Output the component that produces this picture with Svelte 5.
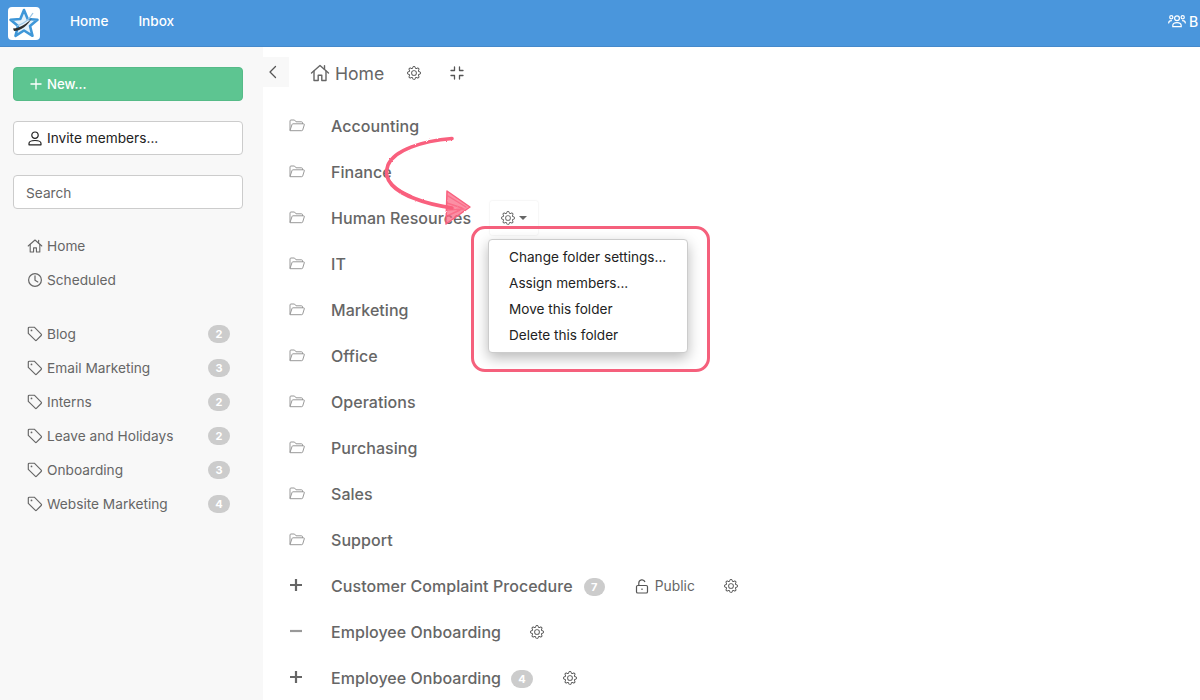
<script>
  const tags = [
    ['Blog', 2], ['Email Marketing', 3], ['Interns', 2],
    ['Leave and Holidays', 2], ['Onboarding', 3], ['Website Marketing', 4]
  ];
  const folders = ['Accounting', 'Finance', 'Human Resources', 'IT', 'Marketing', 'Office', 'Operations', 'Purchasing', 'Sales', 'Support'];
  const menu = ['Change folder settings...', 'Assign members...', 'Move this folder', 'Delete this folder'];
</script>

{#snippet gear(size)}
  <svg class="gear" width={size} height={size} viewBox="0 0 16 16" fill="currentColor">
    <path d="M8 4.754a3.246 3.246 0 1 0 0 6.492 3.246 3.246 0 0 0 0-6.492zM5.754 8a2.246 2.246 0 1 1 4.492 0 2.246 2.246 0 0 1-4.492 0z"/>
    <path d="M9.796 1.343c-.527-1.79-3.065-1.79-3.592 0l-.094.319a.873.873 0 0 1-1.255.52l-.292-.16c-1.64-.892-3.433.902-2.54 2.541l.159.292a.873.873 0 0 1-.52 1.255l-.319.094c-1.79.527-1.79 3.065 0 3.592l.319.094a.873.873 0 0 1 .52 1.255l-.16.292c-.892 1.64.901 3.434 2.541 2.54l.292-.159a.873.873 0 0 1 1.255.52l.094.319c.527 1.79 3.065 1.79 3.592 0l.094-.319a.873.873 0 0 1 1.255-.52l.292.16c1.64.893 3.434-.902 2.54-2.541l-.159-.292a.873.873 0 0 1 .52-1.255l.319-.094c1.79-.527 1.79-3.065 0-3.592l-.319-.094a.873.873 0 0 1-.52-1.255l.16-.292c.893-1.64-.902-3.433-2.541-2.54l-.292.159a.873.873 0 0 1-1.255-.52l-.094-.319zm-2.633.283c.246-.835 1.428-.835 1.674 0l.094.319a1.873 1.873 0 0 0 2.693 1.115l.291-.16c.764-.415 1.6.42 1.184 1.185l-.159.292a1.873 1.873 0 0 0 1.116 2.692l.318.094c.835.246.835 1.428 0 1.674l-.319.094a1.873 1.873 0 0 0-1.115 2.693l.16.291c.415.764-.42 1.6-1.185 1.184l-.291-.159a1.873 1.873 0 0 0-2.693 1.116l-.094.318c-.246.835-1.428.835-1.674 0l-.094-.319a1.873 1.873 0 0 0-2.692-1.115l-.292.16c-.764.415-1.6-.42-1.184-1.185l.159-.291A1.873 1.873 0 0 0 1.945 8.93l-.319-.094c-.835-.246-.835-1.428 0-1.674l.319-.094A1.873 1.873 0 0 0 3.06 4.377l-.16-.292c-.415-.764.42-1.6 1.185-1.184l.292.159a1.873 1.873 0 0 0 2.692-1.115l.094-.319z"/>
  </svg>
{/snippet}

{#snippet house(size)}
  <svg width={size} height={size} viewBox="0 0 20 20" fill="none" stroke="currentColor" stroke-width="1.4" stroke-linecap="round" stroke-linejoin="round">
    <path d="M1.5 10 10 2.5 18.5 10"/>
    <path d="M14.5 2.8v3.6"/>
    <path d="M4 8.2V17.5h4.2v-5.2h3.6v5.2H16V8.2"/>
  </svg>
{/snippet}

{#snippet tag()}
  <svg width="16" height="16" viewBox="0 0 16 16" fill="none" stroke="currentColor" stroke-width="1.15" stroke-linejoin="round">
    <path d="M1.3 2.2a1 1 0 0 1 1-1h5l6.9 6.9a1 1 0 0 1 0 1.4l-4.6 4.7a1 1 0 0 1-1.4 0L1.300 7.400z"/>
    <circle cx="4.500" cy="4.400" r=".9" fill="currentColor" stroke="none"/>
  </svg>
{/snippet}

{#snippet folder()}
  <svg width="16" height="13" viewBox="0 0 16 13" fill="none" stroke="#999" stroke-width="1" stroke-linejoin="round">
    <path d="M1 11.500V2a1 1 0 0 1 1-1h3.500l1.500 1.800h5.500a1 1 0 0 1 1 1V5"/>
    <path d="M1 11.500 3 5.500a1 1 0 0 1 1-.7h10.500a.8.8 0 0 1 .8 1L13.700 11a1 1 0 0 1-1 .7H1z"/>
  </svg>
{/snippet}

<div class="page">
  <header class="topbar">
    <div class="logo">
      <svg width="32" height="32" viewBox="0 0 32 32">
        <path d="M16 3 19.700 12 29.500 12.800 22 19 24.500 28.800 16 23.500 7.500 28.800 10 19 2.500 12.800 12.300 12Z" fill="#e4f1fa" stroke="#3f97d8" stroke-width="2.600" stroke-linejoin="round"/>
        <path d="M5 21.500C12 21 19 17 24 11 20 18 13 24 6 24Z" fill="#2e2e2e"/>
        <path d="M9 19C15 17 21 13 25 6" fill="none" stroke="#9cc6e6" stroke-width="1.300"/>
      </svg>
    </div>
    <nav class="topnav">
      <span>Home</span>
      <span>Inbox</span>
    </nav>
    <div class="account">
      <svg width="18" height="14" viewBox="0 0 18 14" fill="none" stroke="#fff" stroke-width="1.200" stroke-linecap="round">
        <circle cx="9" cy="4.200" r="2.400"/>
        <path d="M4.800 12.600v-1c0-1.800 1.500-2.900 4.200-2.900s4.200 1.100 4.200 2.900v1z"/>
        <circle cx="3.300" cy="3.300" r="1.600"/>
        <circle cx="14.700" cy="3.300" r="1.600"/>
        <path d="M.7 9c0-1.500 1-2.300 2.700-2.300M17.300 9c0-1.500-1-2.300-2.700-2.300"/>
      </svg>
      <span>B</span>
    </div>
  </header>

  <div class="body">
    <aside class="sidebar">
      <button class="btn new">
        <svg width="12" height="12" viewBox="0 0 12 12" stroke="#fff" stroke-width="1.300"><path d="M6 .5v11M.5 6h11"/></svg>
        New...
      </button>
      <button class="btn invite">
        <svg width="14" height="15" viewBox="0 0 14 15" fill="none" stroke="#222" stroke-width="1.200">
          <circle cx="7" cy="4.200" r="3.200"/>
          <path d="M1 13.800v-1.300c0-2 2-3 6-3s6 1 6 3v1.300z" stroke-linejoin="round"/>
        </svg>
        Invite members...
      </button>
      <div class="search">Search</div>

      <ul class="nav primary">
        <li>
          <span class="nav-label">{@render house(16)} Home</span>
        </li>
        <li>
          <span class="nav-label">
            <svg width="16" height="16" viewBox="0 0 16 16" fill="none" stroke="currentColor" stroke-width="1.200" stroke-linecap="round" stroke-linejoin="round">
              <circle cx="8" cy="8" r="6.400"/>
              <path d="M8 3.800V8.300l2.800 1.600"/>
            </svg>
            Scheduled
          </span>
        </li>
      </ul>

      <ul class="nav">
        {#each tags as [name, count]}
          <li>
            <span class="nav-label">{@render tag()} {name}</span>
            <span class="badge">{count}</span>
          </li>
        {/each}
      </ul>
    </aside>

    <main class="main">
      <div class="collapse">
        <svg width="9" height="14" viewBox="0 0 9 14" fill="none" stroke="#555" stroke-width="1.300" stroke-linecap="round" stroke-linejoin="round"><path d="M7.500 1.500 2 7l5.500 5.500"/></svg>
      </div>
      <div class="crumb">
        <span class="crumb-title">{@render house(20)} Home</span>
        <span class="crumb-gear">{@render gear(14)}</span>
        <svg class="shrink" width="14" height="14" viewBox="0 0 14 14" fill="none" stroke="#555" stroke-width="1.300" stroke-linecap="round" stroke-linejoin="round">
          <path d="M4.500 1v3.500H1M9.500 1v3.500H13M4.500 13V9.500H1M9.500 13V9.500H13"/>
        </svg>
      </div>

      <ul class="tree">
        {#each folders as f}
          <li class="row">
            <span class="lead">{@render folder()}</span>
            <span class="name">{f}</span>
            {#if f === 'Human Resources'}
              <span class="gear-btn">
                {@render gear(14)}
                <span class="caret"></span>
              </span>
            {/if}
          </li>
        {/each}
        <li class="row">
          <span class="lead sign"><svg width="14" height="14" viewBox="0 0 14 14" stroke="#666" stroke-width="2.200"><path d="M7 1v12M1 7h12"/></svg></span>
          <span class="name">Customer Complaint Procedure</span>
          <span class="badge count">7</span>
          <span class="public">
            <svg width="14" height="15" viewBox="0 0 14 15" fill="none" stroke="#555" stroke-width="1.200" stroke-linejoin="round">
              <rect x="1.500" y="6.500" width="11" height="7.500" rx="1.300"/>
              <path d="M3.800 6.500V4a3.200 3.200 0 0 1 6.200-1"/>
              <path d="M7 9.500v1.500"/>
            </svg>
            Public
          </span>
          <span class="row-gear public-gear">{@render gear(14)}</span>
        </li>
        <li class="row">
          <span class="lead sign"><svg width="14" height="14" viewBox="0 0 14 14" stroke="#999" stroke-width="2.200"><path d="M1 7h12"/></svg></span>
          <span class="name">Employee Onboarding</span>
          <span class="row-gear plain">{@render gear(14)}</span>
        </li>
        <li class="row">
          <span class="lead sign"><svg width="14" height="14" viewBox="0 0 14 14" stroke="#666" stroke-width="2.200"><path d="M7 1v12M1 7h12"/></svg></span>
          <span class="name">Employee Onboarding</span>
          <span class="badge count second">4</span>
          <span class="row-gear after-badge">{@render gear(14)}</span>
        </li>
      </ul>
    </main>
  </div>

  <!-- overlays -->
  <div class="dropdown">
    {#each menu as m}
      <div class="item">{m}</div>
    {/each}
  </div>
  <div class="highlight"></div>
  <svg class="arrow" width="1200" height="700" viewBox="0 0 1200 700" fill="none">
    <defs>
      <filter id="rough" x="-10%" y="-10%" width="120%" height="120%">
        <feTurbulence type="fractalNoise" baseFrequency=".35" numOctaves="2" seed="4"/>
        <feDisplacementMap in="SourceGraphic" scale="2"/>
      </filter>
    </defs>
    <g filter="url(#rough)" stroke="#f9607e" stroke-linecap="round">
      <path d="M452 138.500C422 141 394 150 388 165 382 180 395 192 416 199 428 204 440 206 452 208" stroke-width="3.600"/>
      <path d="M386.500 172C387 182 397 190 411 196" stroke-width="2.400"/>
      <path d="M447 191 470 207 446 224Z" fill="#f9607e" fill-opacity=".7" stroke-width="1.500" stroke-linejoin="round"/>
      <path d="M448 196 466 207M447 203 462 208M447 210 464 209M447 216 460 210" stroke-width="1.400" stroke-opacity=".7"/>
    </g>
  </svg>
</div>

<style>
  :global(body) {
    margin: 0;
    background: #fff;
    font-family: Inter, "Liberation Sans", sans-serif;
  }
  .page {
    position: relative;
    width: 1200px;
    height: 700px;
    overflow: hidden;
    color: #666;
  }
  .topbar {
    height: 47px;
    box-sizing: border-box;
    background: #4a96dc;
    border-bottom: 1px solid #4589cb;
    display: flex;
    align-items: center;
    padding: 0 0 3px 8px;
    color: #fff;
    font-size: 14px;
    font-weight: 500;
  }
  .logo {
    width: 32px;
    height: 33px;
    background: #fff;
    border-radius: 4px;
    display: flex;
    align-items: center;
    justify-content: center;
    margin-top: 3px;
  }
  .topnav {
    display: flex;
    gap: 30px;
    margin-left: 30px;
    margin-bottom: 2px;
    font-size: 13.6px;
  }
  .account {
    margin-left: auto;
    display: flex;
    align-items: center;
    gap: 3px;
    margin-right: -1px;
    margin-bottom: 1px;
    width: 33px;
    overflow: hidden;
  }
  .body {
    display: flex;
    height: 653px;
  }
  .sidebar {
    width: 263px;
    box-sizing: border-box;
    background: #f8f8f8;
    padding: 20px 0 0 13px;
    flex-shrink: 0;
  }
  .btn {
    display: flex;
    align-items: center;
    gap: 5px;
    width: 230px;
    height: 34px;
    box-sizing: border-box;
    border-radius: 4px;
    font: 400 13.7px Inter, sans-serif;
    padding: 0 0 0 14px;
  }
  .new {
    background: #5dc591;
    border: 1px solid #56bb88;
    color: #fff;
    font-weight: 500;
    font-size: 13.2px;
    padding-left: 16px;
  }
  .invite {
    background: #fff;
    border: 1px solid #ccc;
    color: #222;
    margin-top: 20px;
  }
  .search {
    margin-top: 20px;
    width: 230px;
    height: 34px;
    box-sizing: border-box;
    border: 1px solid #ccc;
    border-radius: 4px;
    background: #fff;
    color: #666;
    font-size: 13.7px;
    line-height: 34px;
    padding-left: 12px;
  }
  .nav {
    list-style: none;
    margin: 0;
    padding: 0 33px 0 14px;
    font-size: 13.7px;
  }
  .primary {
    margin-top: 20px;
    margin-bottom: 20px;
  }
  .nav li {
    height: 34px;
    display: flex;
    align-items: center;
    justify-content: space-between;
  }
  .nav-label {
    display: flex;
    align-items: center;
    gap: 4px;
    line-height: 32px;
    height: 34px;
  }
  .nav-label :global(svg) {
    flex-shrink: 0;
  }
  .badge {
    width: 22px;
    height: 18px;
    border-radius: 9px;
    background: #ccc;
    color: #fff;
    font-size: 11px;
    font-weight: 700;
    display: flex;
    align-items: center;
    justify-content: center;
  }
  .main {
    flex: 1;
    position: relative;
    min-width: 0;
  }
  .collapse {
    position: absolute;
    left: 0;
    top: 10px;
    width: 26px;
    height: 30px;
    background: #f8f8f8;
    display: flex;
    align-items: center;
    padding-left: 5px;
    box-sizing: border-box;
  }
  .crumb {
    display: flex;
    align-items: center;
    height: 52px;
    padding-left: 47px;
  }
  .crumb-title {
    display: flex;
    align-items: center;
    gap: 5px;
    font-size: 17.6px;
    color: #666;
  }
  .crumb-gear {
    display: flex;
    margin-left: 23px;
    color: #555;
  }
  .shrink {
    margin-left: 29px;
  }
  .tree {
    list-style: none;
    margin: 4px 0 0;
    padding: 0;
  }
  .row {
    height: 46px;
    display: flex;
    align-items: center;
    font-size: 16px;
    font-weight: 500;
    color: #666;
    letter-spacing: .05px;
  }
  .lead {
    width: 68px;
    padding-left: 26px;
    box-sizing: border-box;
    display: flex;
    align-items: center;
    margin-top: -2px;
    flex-shrink: 0;
  }
  .sign {
    margin-top: -2px;
  }
  .gear-btn {
    display: flex;
    align-items: center;
    justify-content: center;
    gap: 4px;
    width: 48px;
    height: 34px;
    margin-left: 19px;
    box-shadow: 0 0 2px rgba(0, 0, 0, .12);
    border-radius: 2px;
    color: #666;
  }
  .caret {
    width: 0;
    height: 0;
    border-left: 4px solid transparent;
    border-right: 4px solid transparent;
    border-top: 4px solid #666;
  }
  .count {
    margin-left: 11px;
    margin-top: 2px;
    height: 18px;
    width: 21px;
  }
  .count.second {
    margin-left: 10px;
    width: 22px;
  }
  .public {
    display: flex;
    align-items: center;
    gap: 6px;
    margin-left: 30px;
    font-size: 13.8px;
    font-weight: 400;
  }
  .row-gear {
    display: flex;
    color: #555;
  }
  .public-gear { margin-left: 29px; }
  .plain { margin-left: 29px; }
  .after-badge { margin-left: 30px; }
  .dropdown {
    position: absolute;
    left: 488px;
    top: 239px;
    width: 200px;
    height: 114px;
    box-sizing: border-box;
    background: #fff;
    border: 1px solid #ccc;
    border-radius: 4px;
    box-shadow: 0 5px 14px rgba(0, 0, 0, .28);
    padding: 4px 0 0 20px;
    font-size: 13.6px;
    color: #222;
  }
  .item {
    height: 26px;
    line-height: 26px;
  }
  .highlight {
    position: absolute;
    left: 471px;
    top: 226px;
    width: 239px;
    height: 146px;
    box-sizing: border-box;
    border: 3px solid #f5607c;
    border-radius: 14px;
    pointer-events: none;
  }
  .arrow {
    position: absolute;
    inset: 0;
    pointer-events: none;
  }
</style>
